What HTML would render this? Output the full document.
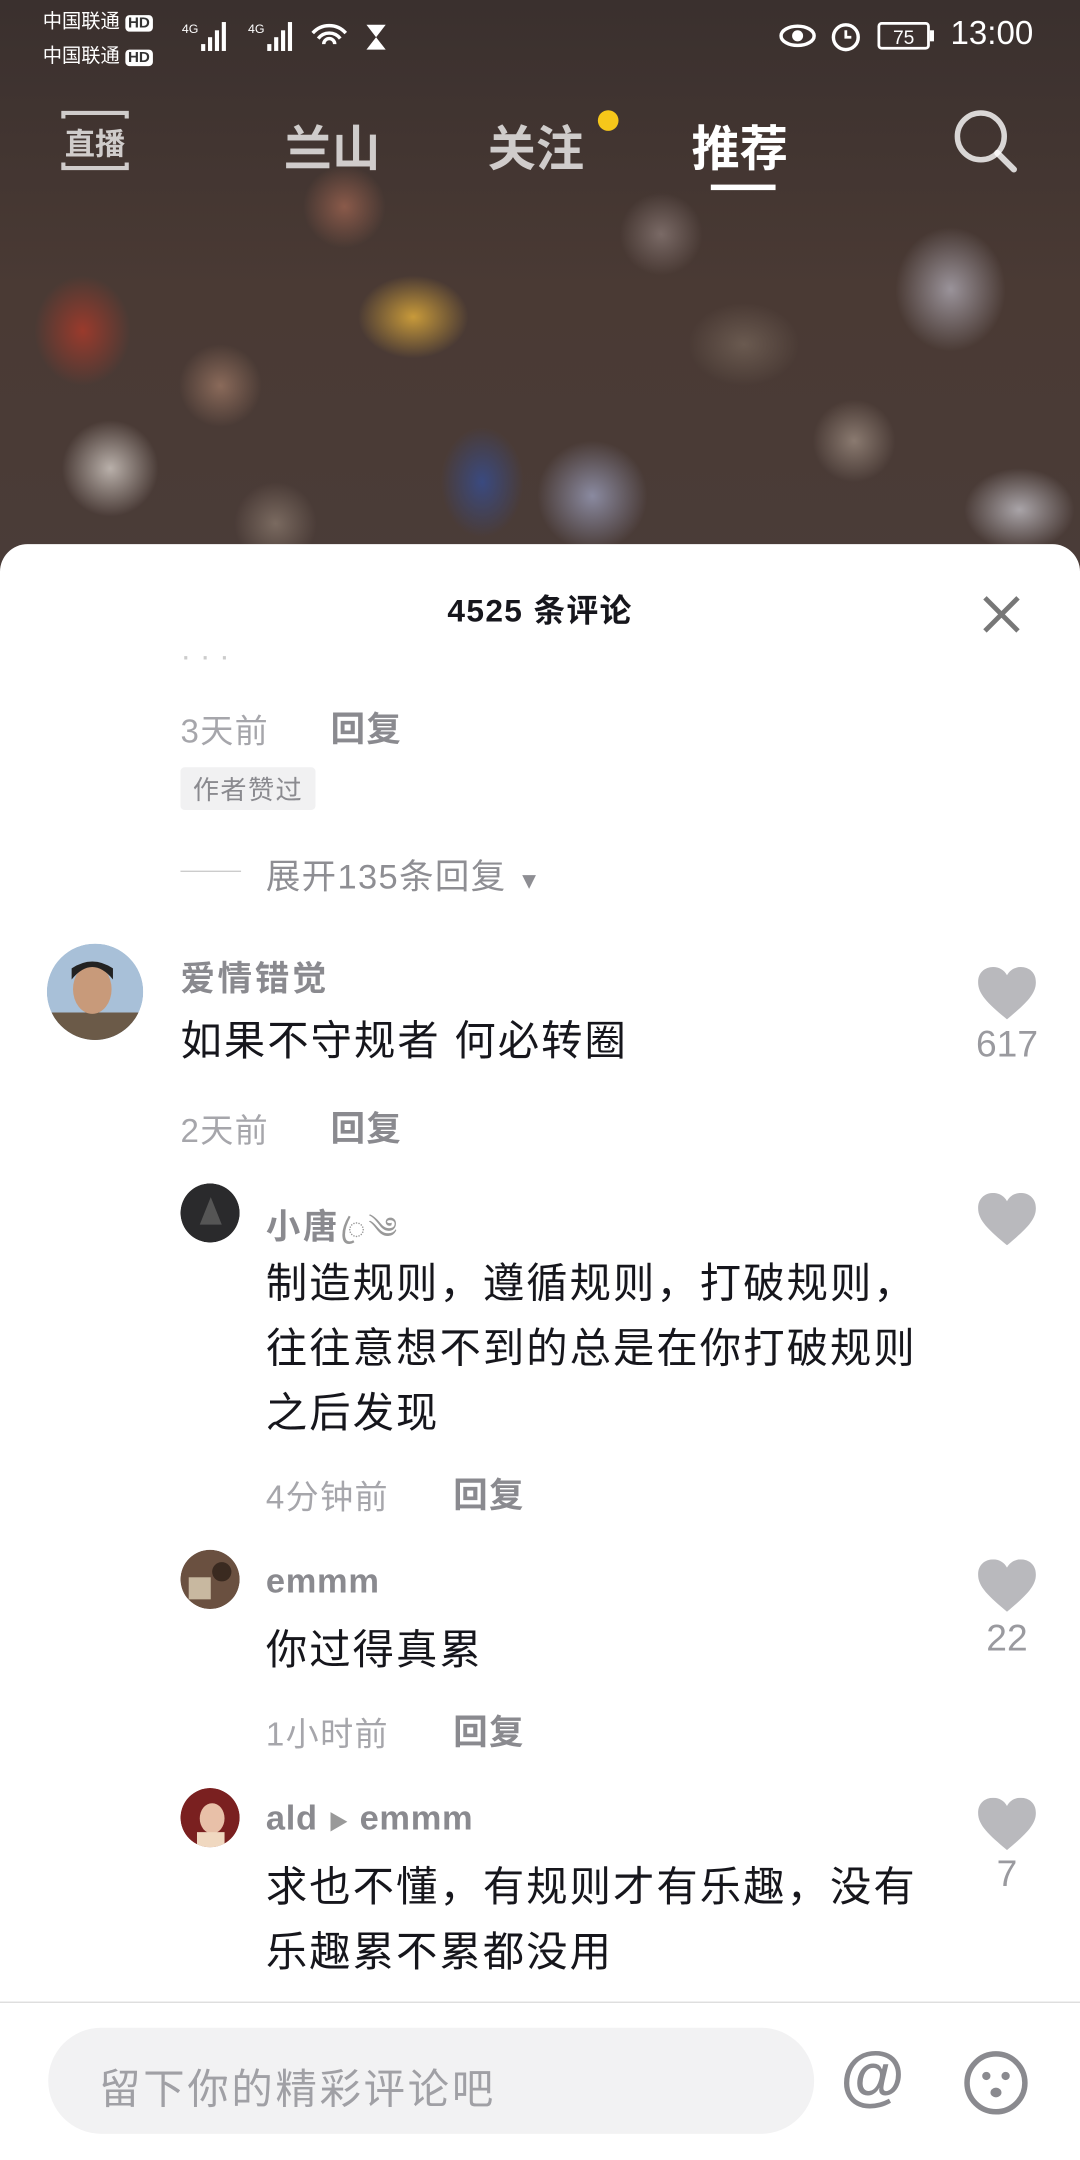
<!DOCTYPE html>
<html><head><meta charset="utf-8"><style>
html,body{margin:0;padding:0;width:1080px;height:2160px;overflow:hidden;background:#fff}
#w{position:absolute;left:0;top:0;width:784px;height:1568px;transform:scale(1.377551);transform-origin:0 0;font-family:"Liberation Sans","Noto Sans CJK SC",sans-serif}
.bg{position:absolute;left:0;top:0;width:784px;height:420px;background:
radial-gradient(ellipse 40px 30px at 300px 230px,#c89a3a,transparent),
radial-gradient(ellipse 35px 40px at 60px 240px,#9a3a2c,transparent),
radial-gradient(ellipse 40px 45px at 690px 210px,#9a939a,transparent),
radial-gradient(ellipse 40px 40px at 430px 360px,#8a8aa0,transparent),
radial-gradient(ellipse 35px 35px at 80px 340px,#b9b0aa,transparent),
radial-gradient(ellipse 30px 40px at 350px 350px,#3a4a80,transparent),
radial-gradient(ellipse 40px 30px at 740px 370px,#a9a4a8,transparent),
radial-gradient(ellipse 30px 30px at 250px 150px,#8a5a4a,transparent),
radial-gradient(ellipse 40px 30px at 540px 250px,#6a5a50,transparent),
radial-gradient(ellipse 30px 30px at 160px 280px,#8a6a5a,transparent),
radial-gradient(ellipse 30px 30px at 620px 320px,#8a7a70,transparent),
radial-gradient(ellipse 30px 30px at 480px 170px,#7a6a66,transparent),
radial-gradient(ellipse 30px 30px at 200px 380px,#7a6a60,transparent),
linear-gradient(180deg,#3a302e,#4a3a34 50%,#4a3c38);}
.sb{position:absolute;color:#fff;font-size:14px}
.tab{position:absolute;top:80px;font-size:35px;color:rgba(255,255,255,.75);font-weight:bold}
.sheet{position:absolute;left:0;top:395px;width:784px;height:1173px;background:#fff;border-radius:20px 20px 0 0}
.t{position:absolute;white-space:nowrap}
.gray{color:#a6a6ab;font-size:24px;letter-spacing:1px}
.rep{color:#8a8a8f;font-size:25px;font-weight:bold;letter-spacing:1px}
.name{color:#8a8a8f;font-size:25px;font-weight:bold;letter-spacing:2px}
.txt{color:#16161c;font-size:30px;line-height:47px;letter-spacing:1.5px}
.av{position:absolute;border-radius:50%}
.heart{position:absolute;width:42px;height:38px}
.cnt{position:absolute;color:#9a9a9f;font-size:27px;width:62px;text-align:center}
</style></head><body><div id="w">
<div class="bg"></div>
<div class="sb" style="left:31px;top:5px">中国联通 <b style="font-size:11px;background:#fff;color:#333;border-radius:3px;padding:0 2px">HD</b></div>
<div class="sb" style="left:31px;top:30px">中国联通 <b style="font-size:11px;background:#fff;color:#333;border-radius:3px;padding:0 2px">HD</b></div>
<svg style="position:absolute;left:132px;top:12px" width="160" height="28"><g fill="#fff"><text x="0" y="12" font-size="9" font-family="Liberation Sans">4G</text><rect x="14" y="20" width="3" height="5"/><rect x="19" y="15" width="3" height="10"/><rect x="24" y="10" width="3" height="15"/><rect x="29" y="4" width="3" height="21"/><text x="48" y="12" font-size="9" font-family="Liberation Sans">4G</text><rect x="62" y="20" width="3" height="5"/><rect x="67" y="15" width="3" height="10"/><rect x="72" y="10" width="3" height="15"/><rect x="77" y="4" width="3" height="21"/></g><path d="M95 12a16 16 0 0 1 24 0M99 16a10 10 0 0 1 16 0M103 20a4 4 0 0 1 8 0" stroke="#fff" stroke-width="2.5" fill="none"/><path d="M134 6h14l-7 9 7 9h-14l7-9z" fill="#fff"/></svg>
<svg style="position:absolute;left:564px;top:12px" width="120" height="30"><ellipse cx="15" cy="14" rx="12" ry="7" stroke="#fff" stroke-width="2.5" fill="none"/><circle cx="15" cy="14" r="4" fill="#fff"/><circle cx="50" cy="15" r="9" stroke="#fff" stroke-width="2.5" fill="none"/><path d="M50 10v5h4" stroke="#fff" stroke-width="2" fill="none"/><rect x="74" y="5" width="36" height="18" rx="2" stroke="#fff" stroke-width="2" fill="none"/><rect x="111" y="10" width="3" height="8" fill="#fff"/><text x="92" y="20" font-size="14" fill="#fff" text-anchor="middle" font-family="Liberation Sans">75</text></svg>
<div class="sb" style="left:690px;top:11px;font-size:24px">13:00</div>
<svg style="position:absolute;left:44px;top:74px" width="52" height="54"><path d="M2 12V8h46v4M2 44v4h46v-4" stroke="rgba(255,255,255,.75)" stroke-width="3" fill="none"/><text x="25" y="38" font-size="22" font-weight="bold" fill="rgba(255,255,255,.75)" text-anchor="middle" font-family="Noto Sans CJK SC">直播</text></svg>
<div class="tab" style="left:206px">兰山</div>
<div class="tab" style="left:354px">关注</div>
<div style="position:absolute;left:434px;top:80px;width:15px;height:15px;border-radius:50%;background:#f6c71a"></div>
<div class="tab" style="left:502px;color:#fff">推荐</div>
<div style="position:absolute;left:516px;top:134px;width:47px;height:4px;background:#fff"></div>
<svg style="position:absolute;left:690px;top:78px" width="52" height="52"><circle cx="22" cy="21" r="17" stroke="rgba(255,255,255,.8)" stroke-width="4" fill="none"/><path d="M34 33l12 12" stroke="rgba(255,255,255,.8)" stroke-width="4.5" stroke-linecap="round"/></svg>

<div class="sheet">
<div class="t" style="left:0;width:784px;text-align:center;top:29px;font-size:23px;font-weight:bold;color:#16161c;letter-spacing:1px">4525 条评论</div>
<svg style="position:absolute;left:713px;top:37px" width="28" height="28"><path d="M2 2l24 24M26 2L2 26" stroke="#777" stroke-width="3.5"/></svg>
<div class="t" style="left:131px;top:81px;width:140px;height:6px;overflow:hidden;color:#ccc;font-size:23px;line-height:0">· · ·</div>
<div class="t gray" style="left:131px;top:116px">3天前</div>
<div class="t rep" style="left:240px;top:115px">回复</div>
<div class="t" style="left:131px;top:162px;background:#f1f1f2;color:#8a8a8f;font-size:19px;padding:2px 9px;border-radius:3px;letter-spacing:1px">作者赞过</div>
<div style="position:absolute;left:131px;top:237px;width:44px;height:1px;background:#ccc"></div>
<div class="t gray" style="left:193px;top:222px;color:#8e8e93;font-size:25px">展开135条回复 <span style="font-size:17px">▼</span></div>
</div>

<svg class="av" style="left:34px;top:685px" width="70" height="70"><defs><clipPath id="c1"><circle cx="35" cy="35" r="35"/></clipPath></defs><g clip-path="url(#c1)"><rect width="70" height="70" fill="#a8c0d8"/><rect y="50" width="70" height="20" fill="#6b5a48"/><ellipse cx="33" cy="33" rx="14" ry="18" fill="#c89a7a"/><path d="M18 26q15-18 30 0v-8q-15-10-30 0z" fill="#222"/></g></svg>
<div class="t name" style="left:131px;top:691px">爱情错觉</div>
<div class="t txt" style="left:131px;top:733px">如果不守规者 何必转圈</div>
<div class="t gray" style="left:131px;top:801px">2天前</div>
<div class="t rep" style="left:240px;top:800px">回复</div>

<svg class="av" style="left:131px;top:859px" width="43" height="43"><circle cx="21.5" cy="21.5" r="21.5" fill="#2a2a2c"/><path d="M14 30l8-20 8 20z" fill="#555"/></svg>
<div class="t name" style="left:193px;top:867px">小唐<span style="font-weight:normal;color:#999;font-size:22px">ꦿ༄</span></div>
<div class="t txt" style="left:193px;top:909px">制造规则，遵循规则，打破规则，<br>往往意想不到的总是在你打破规则<br>之后发现</div>
<div class="t gray" style="left:193px;top:1067px">4分钟前</div>
<div class="t rep" style="left:329px;top:1066px">回复</div>

<svg class="av" style="left:131px;top:1125px" width="43" height="43"><circle cx="21.5" cy="21.5" r="21.5" fill="#6a5040"/><rect x="6" y="20" width="16" height="16" fill="#c8b8a0"/><circle cx="30" cy="16" r="7" fill="#3a2a20"/></svg>
<div class="t name" style="left:193px;top:1134px;letter-spacing:0.5px">emmm</div>
<div class="t txt" style="left:193px;top:1175px">你过得真累</div>
<div class="t gray" style="left:193px;top:1239px">1小时前</div>
<div class="t rep" style="left:329px;top:1238px">回复</div>

<svg class="av" style="left:131px;top:1298px" width="43" height="43"><circle cx="21.5" cy="21.5" r="21.5" fill="#7a2020"/><ellipse cx="23" cy="22" rx="9" ry="11" fill="#e8c0a8"/><rect x="12" y="32" width="20" height="11" fill="#f0d8c0"/></svg>
<div class="t name" style="left:193px;top:1306px;letter-spacing:0.5px">ald <span style="font-size:15px;color:#999">▶</span> emmm</div>
<div class="t txt" style="left:193px;top:1347px">求也不懂，有规则才有乐趣，没有<br>乐趣累不累都没用</div>

<svg class="heart" style="left:710px;top:702px" viewBox="0 0 42 38"><path d="M21 38C8 27 0 20 0 11 0 4 5 0 11 0c4 0 8 2 10 6 2-4 6-6 10-6 6 0 11 4 11 11 0 9-8 16-21 27z" fill="#b9b9bd"/></svg>
<div class="cnt" style="left:700px;top:743px">617</div>
<svg class="heart" style="left:710px;top:866px" viewBox="0 0 42 38"><path d="M21 38C8 27 0 20 0 11 0 4 5 0 11 0c4 0 8 2 10 6 2-4 6-6 10-6 6 0 11 4 11 11 0 9-8 16-21 27z" fill="#b9b9bd"/></svg>
<svg class="heart" style="left:710px;top:1132px" viewBox="0 0 42 38"><path d="M21 38C8 27 0 20 0 11 0 4 5 0 11 0c4 0 8 2 10 6 2-4 6-6 10-6 6 0 11 4 11 11 0 9-8 16-21 27z" fill="#b9b9bd"/></svg>
<div class="cnt" style="left:700px;top:1174px">22</div>
<svg class="heart" style="left:710px;top:1305px" viewBox="0 0 42 38"><path d="M21 38C8 27 0 20 0 11 0 4 5 0 11 0c4 0 8 2 10 6 2-4 6-6 10-6 6 0 11 4 11 11 0 9-8 16-21 27z" fill="#b9b9bd"/></svg>
<div class="cnt" style="left:700px;top:1345px">7</div>

<div style="position:absolute;left:0;top:1453px;width:784px;height:1px;background:#ddd"></div>
<div style="position:absolute;left:35px;top:1472px;width:556px;height:77px;border-radius:39px;background:#f2f2f3"></div>
<div class="t" style="left:72px;top:1492px;font-size:30px;color:#a0a0a5;letter-spacing:2px">留下你的精彩评论吧</div>
<div class="t" style="left:610px;top:1480px;font-size:48px;color:#8a8a8f;font-weight:bold">@</div>
<svg style="position:absolute;left:699px;top:1488px" width="48" height="48"><circle cx="24" cy="24" r="21" stroke="#8a8a8f" stroke-width="4" fill="none"/><circle cx="17" cy="19" r="3" fill="#8a8a8f"/><circle cx="31" cy="19" r="3" fill="#8a8a8f"/><ellipse cx="24" cy="31" rx="4" ry="3.5" fill="#8a8a8f"/></svg>
</div></body></html>
